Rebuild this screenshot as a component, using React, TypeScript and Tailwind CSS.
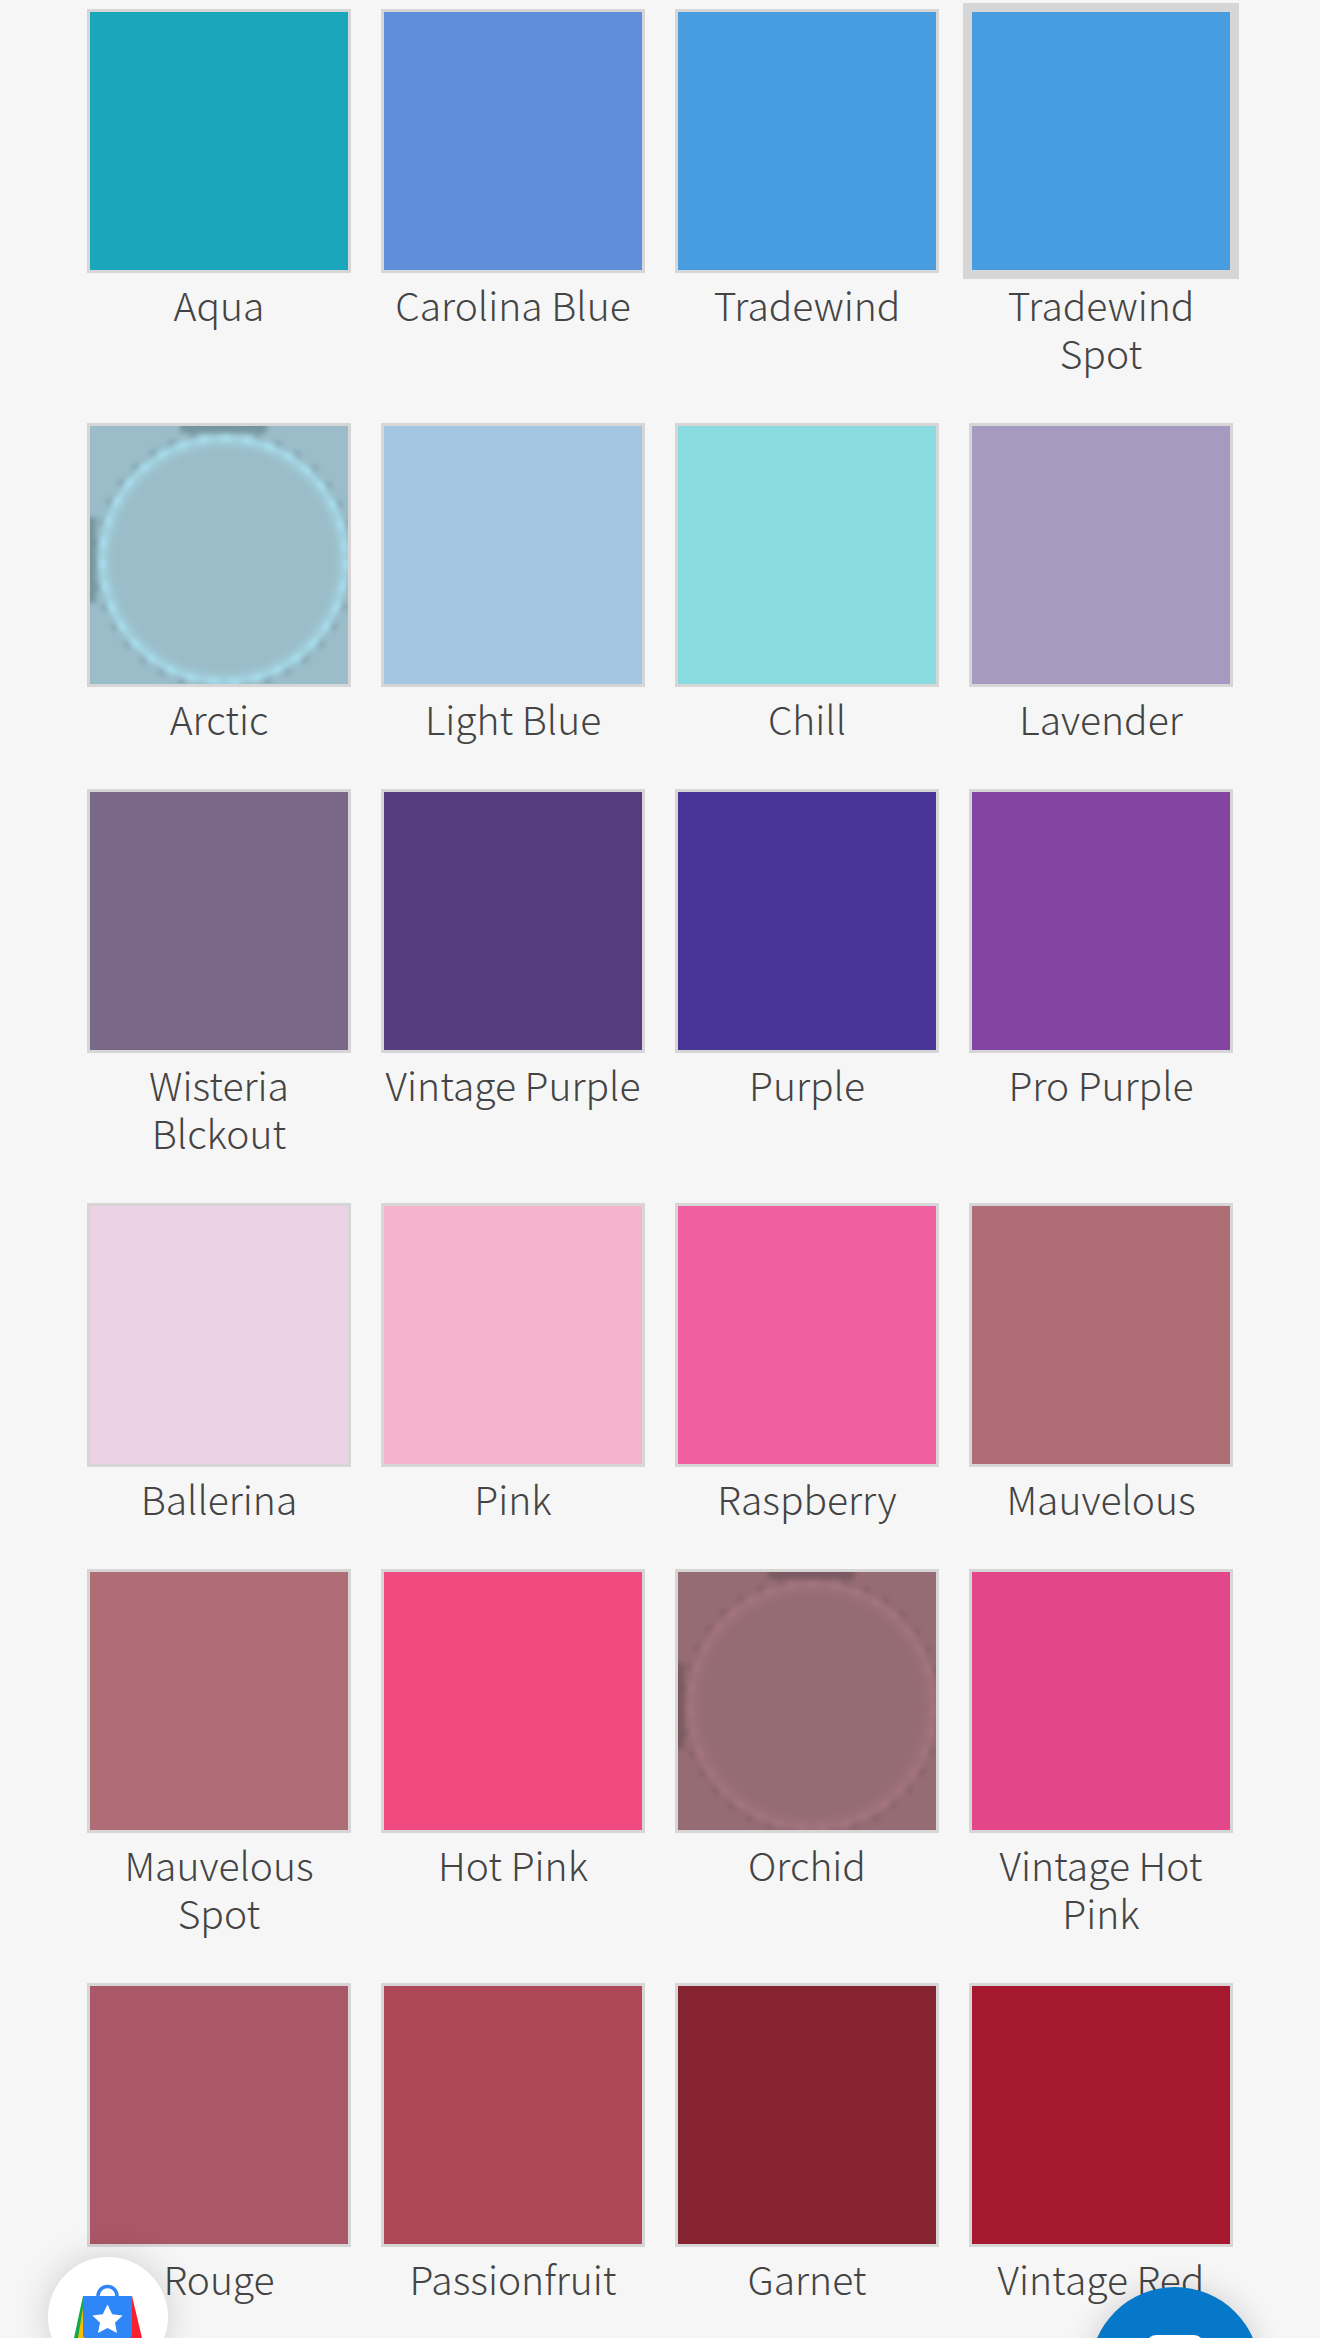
const swatches = [
  { name: "Aqua", color: "bg-[#1aa7bc]" },
  { name: "Carolina Blue", color: "bg-[#5f8edb]" },
  { name: "Tradewind", color: "bg-[#479ddf]" },
  { name: "Tradewind Spot", color: "bg-[#479ddf]", selected: true },
  { name: "Arctic", color: "bg-[#9abdc9]", ring: { glow: "#aae2f2", edge: "#76969f" } },
  { name: "Light Blue", color: "bg-[#a3c7e2]" },
  { name: "Chill", color: "bg-[#8adbdf]" },
  { name: "Lavender", color: "bg-[#a79ac0]" },
  { name: "Wisteria Blckout", color: "bg-[#796887]" },
  { name: "Vintage Purple", color: "bg-[#563c80]" },
  { name: "Purple", color: "bg-[#483597]" },
  { name: "Pro Purple", color: "bg-[#8444a2]" },
  { name: "Ballerina", color: "bg-[#ebd3e5]" },
  { name: "Pink", color: "bg-[#f5b3cd]" },
  { name: "Raspberry", color: "bg-[#f060a1]" },
  { name: "Mauvelous", color: "bg-[#af6e75]" },
  { name: "Mauvelous Spot", color: "bg-[#af6e75]" },
  { name: "Hot Pink", color: "bg-[#f14a81]" },
  { name: "Orchid", color: "bg-[#966c74]", ring: { glow: "#a67682", edge: "#7a5a62" } },
  { name: "Vintage Hot Pink", color: "bg-[#e4468a]" },
  { name: "Rouge", color: "bg-[#aa5767]" },
  { name: "Passionfruit", color: "bg-[#ae4859]" },
  { name: "Garnet", color: "bg-[#852331]" },
  { name: "Vintage Red", color: "bg-[#a6182e]" },
];

// Fabric photo of a round spot: soft light ring with a darker halo and two worn edges
function SpotFabric({ glow, edge }: { glow: string; edge: string }) {
  return (
    <svg viewBox="0 0 258 258" className="block h-full w-full">
      <defs>
        <filter id="soft" x="-10%" y="-10%" width="120%" height="120%">
          <feGaussianBlur stdDeviation="2.4" />
        </filter>
      </defs>
      <g filter="url(#soft)" fill="none">
        <rect x="90" y="-8" width="87" height="15" fill={edge} />
        <rect x="-8" y="91" width="14" height="86" fill={edge} />
        <circle cx="134" cy="134" r="129" stroke={edge} strokeWidth="4" strokeDasharray="8 14" opacity="0.7" />
        <circle cx="134" cy="134" r="118" stroke={glow} strokeWidth="10" opacity="0.25" />
        <circle cx="134" cy="134" r="122" stroke={glow} strokeWidth="4" opacity="0.7" />
        <circle cx="134" cy="134" r="122" stroke={glow} strokeWidth="6" strokeDasharray="9 13" />
      </g>
    </svg>
  );
}

function Swatch({ item }: { item: (typeof swatches)[number] }) {
  return (
    <div className="w-[264px] pb-[47px]">
      <div
        className={`${item.color} ${
          item.selected
            ? "-m-[6px] h-[276px] w-[276px] border-[9px]"
            : "h-[264px] w-[264px] border-[3px]"
        } overflow-hidden border-[#d6d6d6]`}
      >
        {item.ring && <SpotFabric glow={item.ring.glow} edge={item.ring.edge} />}
      </div>
      <p className="mt-[7px] text-center text-[39px] font-light leading-[48px] text-[#444444]">{item.name}</p>
    </div>
  );
}

export default function App() {
  return (
    <div className="relative h-[2338px] overflow-hidden bg-[#f6f6f6] font-['Noto_Sans_CJK_SC','Source_Sans_Pro','Noto_Sans',sans-serif]">
      <div className="grid grid-cols-[repeat(4,264px)] gap-x-[30px] pl-[87px] pt-[9px]">
        {swatches.map((item) => (
          <Swatch key={item.name} item={item} />
        ))}
      </div>

      {/* reviews badge */}
      <div className="absolute left-[48px] top-[2257px] h-[120px] w-[120px] rounded-full bg-white shadow-[0_0_36px_rgba(0,0,0,0.16)]">
        <svg viewBox="0 0 120 120" className="h-full w-full">
          <path d="M35 39 L26 81 L44 81 Z" fill="#12a84e" />
          <path d="M36 45 L30 81 L44 81 Z" fill="#fbbc04" />
          <path d="M84 39 L94 81 L76 81 Z" fill="#f8202f" />
          <path d="M50 39 a9.5 9.5 0 0 1 19 0" fill="none" stroke="#2f86f6" strokeWidth="3.5" />
          <path d="M35 39 H84 V78 a3 3 0 0 1 -3 3 H38 a3 3 0 0 1 -3 -3 Z" fill="#2f86f6" />
          <path d="M59.5 47.5 L64.2 57.2 L74.6 58.6 L67 65.8 L69 76 L59.5 71 L50 76 L52 65.8 L44.4 58.6 L54.8 57.2 Z" fill="#fff" />
        </svg>
      </div>

      {/* chat launcher */}
      <div className="absolute left-[1090px] top-[2287px] h-[170px] w-[170px] rounded-full bg-[#0678c9] shadow-[0_0_30px_rgba(0,0,0,0.16)]">
        <div className="mx-auto mt-[48px] h-[40px] w-[58px] rounded-[10px] bg-white" />
      </div>
    </div>
  );
}
